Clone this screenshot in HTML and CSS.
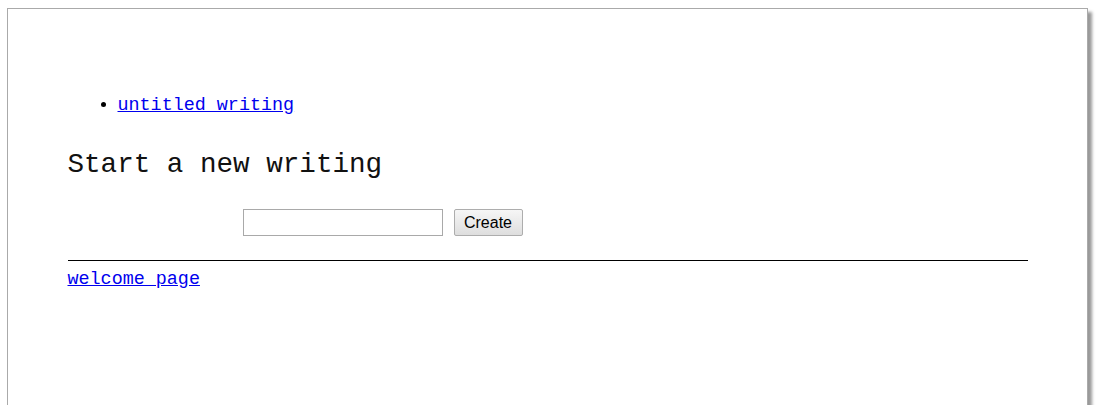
FILE: index.html
```html
<!DOCTYPE html>
<html>
<head>
<meta charset="utf-8">
<title>writings</title>
<link rel="stylesheet" href="styles.css">
</head>
<body>
<div class="page">
  <div class="container">
    <ul class="writings">
      <li><a href="#">untitled writing</a></li>
    </ul>
    <h2 class="title">Start a new writing</h2>
    <form class="new-form">
      <input class="name-input" type="text">
      <button class="create-btn" type="button">Create</button>
    </form>
    <hr class="rule">
    <a class="welcome" href="#">welcome page</a>
  </div>
</div>
</body>
</html>
```

FILE: styles.css
```css
html, body {
  margin: 0;
  padding: 0;
  background: #fff;
  overflow: hidden;
}
body {
  font-family: "Liberation Mono", "Courier New", monospace;
  font-size: 18.4px;
  line-height: 21px;
  color: #000;
}
.page {
  margin: 8px 0 0 7px;
  width: 1079px;
  height: 396px;
  border: 1px solid #aaa;
  border-bottom: 0;
  box-shadow: 4px 4px 3px #999;
  background: #fff;
  box-sizing: content-box;
}
.container {
  width: 960px;
  margin: 0 auto;
  padding-top: 86px;
  display: flex;
  flex-direction: column;
  align-items: flex-start;
}
a {
  color: #0000ee;
  text-decoration: underline;
}
.writings {
  margin: 0;
  padding-left: 50px;
  list-style: disc;
}
.title {
  margin: 33px 0 0 0;
  font-size: 27.6px;
  line-height: 32px;
  font-weight: normal;
  color: #111;
}
.new-form {
  margin: 28px 0 0 175px;
  display: flex;
  gap: 11px;
  align-items: center;
}
.name-input {
  width: 200px;
  height: 27px;
  box-sizing: border-box;
  border: 1px solid #a9a9a9;
  padding: 2px 4px;
  margin: 0;
  font-family: "Liberation Sans", Arial, sans-serif;
  font-size: 16px;
}
.create-btn {
  width: 69px;
  height: 27px;
  box-sizing: border-box;
  margin: 0;
  padding: 0;
  text-align: center;
  font-family: "Liberation Sans", Arial, sans-serif;
  font-size: 16px;
  color: #000;
  background: linear-gradient(#f6f6f6, #dedede);
  border: 1px solid #adadad;
  border-radius: 2px;
}
.rule {
  align-self: stretch;
  margin: 24px 0 0 0;
  border: 0;
  border-top: 1px solid #000;
  height: 0;
}
.welcome {
  margin-top: 8px;
}
```
